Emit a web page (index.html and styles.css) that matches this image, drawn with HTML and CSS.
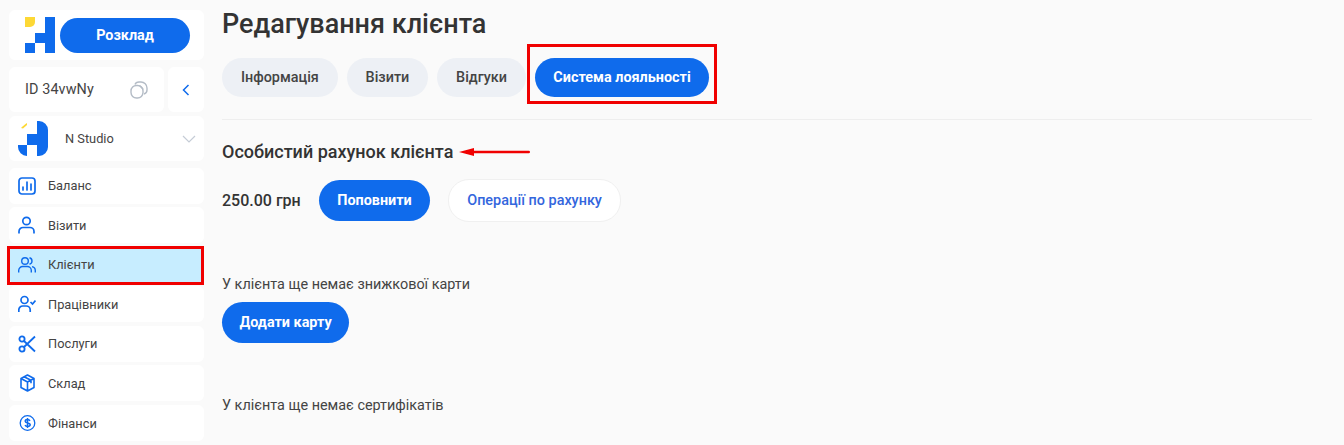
FILE: index.html
```html
<!DOCTYPE html>
<html lang="uk">
<head>
  <meta charset="UTF-8" />
  <title>Редагування клієнта</title>
  <link rel="stylesheet" href="styles.css">
</head>
<body>
  <div class="layout">
    <div class="sidebar">
      <div class="card logo-card">
        <svg class="logo" width="30" height="36" viewBox="0 0 30 36">
          <path d="M0 0h10v5a5 5 0 0 1-5 5H0z" fill="#fdd835"/>
          <path d="M20 0h10v36H20V26H10V16h10zM0 26h10v10H0z" fill="#0f6bec"/>
        </svg>
        <a class="btn schedule-btn" href="#">Розклад</a>
      </div>
      <div class="id-row">
        <div class="card id-card">
          <span>ID 34vwNy</span>
          <svg width="18" height="18" viewBox="0 0 18 18" fill="none" stroke="#b4bcc6" stroke-width="1.4">
            <rect x="1" y="4.500" width="12" height="12.500" rx="5.500"/>
            <path d="M5 3.500C5.500 2 7 1 9 1h2a6 6 0 0 1 6 6v2c0 2-1 3.500-3 4"/>
            <path d="M9.500 4.500l3.500 3.500"/>
          </svg>
        </div>
        <div class="card back-card">
          <svg width="8" height="12" viewBox="0 0 8 12" fill="none" stroke="#0f6bec" stroke-width="1.5"><path d="M6.500 1L1.500 6l5 5"/></svg>
        </div>
      </div>
      <div class="card studio-card">
        <svg class="studio-logo" width="30" height="35" viewBox="0 0 30 35">
          <path d="M3 7c2-2 4-4 6-5v2L5 7.500z" fill="#fdd835"/>
          <path d="M19 0h2a9 9 0 0 1 9 9v17a9 9 0 0 1-9 9h-2V24H9V13h10zM0 24h9v11a9 9 0 0 1-9-9z" fill="#0f6bec"/>
        </svg>
        <span class="studio-name">N Studio</span>
        <svg class="studio-arrow" width="14" height="8" viewBox="0 0 14 8" fill="none" stroke="#c5ccd6" stroke-width="1.2"><path d="M1 1l6 6 6-6"/></svg>
      </div>
      <ul class="menu">
        <li class="menu-item">
          <svg width="18" height="18" viewBox="0 0 18 18" fill="none" stroke="#0f6bec" stroke-width="1.700" stroke-linecap="round"><rect x="1" y="1" width="16" height="16" rx="3"/><path d="M5 13v-3M9 13V5M13 13V7"/></svg>
          Баланс
        </li>
        <li class="menu-item">
          <svg width="18" height="18" viewBox="0 0 18 18" fill="none" stroke="#0f6bec" stroke-width="1.700"><circle cx="8.500" cy="5" r="3.700"/><path d="M1 17.500v-2a4 4 0 0 1 4-4h7a4 4 0 0 1 4 4v2"/></svg>
          Візити
        </li>
        <li class="menu-item active">
          <svg width="18" height="18" viewBox="0 0 18 18" fill="none" stroke="#0f6bec" stroke-width="1.400"><circle cx="7" cy="5" r="3.300"/><path d="M.7 16.500v-2a4 4 0 0 1 4-4h4.600a4 4 0 0 1 4 4v2M11.500 1.800a3.300 3.300 0 0 1 0 6.400M14 10.600a4 4 0 0 1 3.300 3.900v2"/></svg>
          Клієнти
        </li>
        <li class="menu-item">
          <svg width="18" height="18" viewBox="0 0 18 18" fill="none" stroke="#0f6bec" stroke-width="1.700"><circle cx="6.500" cy="5" r="3.500"/><path d="M.8 17v-2a4 4 0 0 1 4-4h3.400a4 4 0 0 1 4 4v2M12.500 7l2 2 3-3.500"/></svg>
          Працівники
        </li>
        <li class="menu-item">
          <svg width="18" height="18" viewBox="0 0 18 18" fill="none" stroke="#0f6bec" stroke-width="1.800"><circle cx="4" cy="4" r="2.600"/><circle cx="4" cy="14" r="2.600"/><path d="M6 6L17 16.500M6 12L17 1.500"/></svg>
          Послуги
        </li>
        <li class="menu-item">
          <svg width="18" height="18" viewBox="0 0 18 18" fill="none" stroke="#0f6bec" stroke-width="1.600" stroke-linejoin="round"><path d="M9.500 1l6.500 3.500v9L9.500 17 3 13.500v-9zM3 4.500L9.500 8 16 4.500M9.500 8v9M6 2.800l7 3.500v3"/></svg>
          Склад
        </li>
        <li class="menu-item">
          <svg width="18" height="18" viewBox="0 0 18 18" fill="none" stroke="#0f6bec" stroke-width="1.300"><circle cx="9.500" cy="9" r="7.300"/><path d="M12 6.800C11.500 5.900 10.500 5.500 9.500 5.500c-1.300 0-2.300.7-2.300 1.700 0 2.500 5 .9 5 3.600 0 1-1 1.700-2.700 1.700-1 0-2-.5-2.500-1.300M9.500 4v10" stroke-width="1.500"/></svg>
          Фінанси
        </li>
      </ul>
    </div>
    <div class="main">
      <h1 class="title">Редагування клієнта</h1>
      <div class="tabs">
        <a class="tab" href="#">Інформація</a>
        <a class="tab" href="#">Візити</a>
        <a class="tab" href="#">Відгуки</a>
        <a class="tab tab-active" href="#">Система лояльності</a>
      </div>
      <hr class="divider">
      <h2 class="subtitle">Особистий рахунок клієнта</h2>
      <div class="account-row">
        <span class="amount">250.00 грн</span>
        <a class="btn" href="#">Поповнити</a>
        <a class="btn btn-outline" href="#">Операції по рахунку</a>
      </div>
      <p class="note card-note">У клієнта ще немає знижкової карти</p>
      <a class="btn add-btn" href="#">Додати карту</a>
      <p class="note cert-note">У клієнта ще немає сертифікатів</p>
    </div>
  </div>

  <!-- red annotations on top of the screenshot -->
  <div class="mark mark-menu"></div>
  <div class="mark mark-tab"></div>
  <svg class="mark-arrow" width="72" height="10" viewBox="0 0 72 10">
    <path d="M0 5l15-4v2.800h54.800a1.200 1.200 0 0 1 0 2.400H15V9z" fill="#f00000"/>
  </svg>
</body>
</html>
```

FILE: styles.css
```css
html, body {
  margin: 0;
  padding: 0;
  height: 445px;
  overflow: hidden;
  font-family: Roboto, sans-serif;
  background-color: #fafafa;
  color: #333;
}

.layout {
  display: flex;
}

.sidebar {
  width: 195px;
  margin: 10px 18px 0 9px;
  flex-shrink: 0;
}

.card {
  background: white;
  border-radius: 6px;
}

.logo-card {
  height: 50px;
  display: flex;
  align-items: center;
  padding-left: 16px;
  gap: 5px;
  box-sizing: border-box;
}

.btn {
  display: inline-flex;
  align-items: center;
  justify-content: center;
  height: 41px;
  padding: 0 18.5px;
  box-sizing: border-box;
  background: #0f6bec;
  color: white;
  font-size: 14.4px;
  font-weight: 700;
  text-decoration: none;
  border-radius: 21px;
}

.schedule-btn {
  width: 130px;
  height: 35px;
}

.id-row {
  display: flex;
  gap: 4px;
  margin-top: 7px;
}

.id-card {
  width: 155px;
  height: 45px;
  display: flex;
  align-items: center;
  justify-content: space-between;
  padding: 0 16px;
  box-sizing: border-box;
  font-size: 14.4px;
  letter-spacing: 0.1px;
  color: #444;
}

.back-card {
  width: 36px;
  height: 45px;
  display: flex;
  align-items: center;
  justify-content: center;
}

.studio-card {
  height: 45px;
  margin-top: 4px;
  display: flex;
  align-items: center;
  padding: 0 8px 0 9px;
  font-size: 12.8px;
  color: #444;
}

.studio-name {
  margin-left: 17px;
  flex: 1;
}

.menu {
  list-style: none;
  margin: 6.5px 0 0;
  padding: 0;
}

.menu-item {
  height: 36px;
  margin-bottom: 3.6px;
  display: flex;
  align-items: center;
  gap: 12px;
  padding-left: 9px;
  background: white;
  border-radius: 6px;
  font-size: 12.8px;
  color: #444;
}

.menu-item.active {
  background: #c7edff;
}

.main {
  flex: 1;
  padding-right: 32px;
}

.title {
  margin: 8px 0 0;
  font-size: 27px;
  line-height: 32px;
  font-weight: 500;
}

.tabs {
  display: flex;
  gap: 9px;
  margin-top: 18px;
}

.tab {
  height: 39px;
  padding: 0 18.9px;
  display: flex;
  align-items: center;
  background: #edf0f5;
  border-radius: 20px;
  color: #444;
  font-size: 14.4px;
  font-weight: 500;
  text-decoration: none;
}

.tab-active {
  background: #0f6bec;
  color: white;
  font-weight: 700;
  padding: 0 18.5px;
}

.divider {
  border: 0;
  border-top: 1px solid #eee;
  margin: 22px 0 0;
}

.subtitle {
  margin: 22px 0 0;
  font-size: 18px;
  line-height: 20px;
  font-weight: 500;
}

.account-row {
  display: flex;
  align-items: center;
  margin-top: 17px;
}

.amount {
  font-size: 16px;
  font-weight: 500;
  margin-right: 18px;
}

.btn-outline {
  margin-left: 18px;
  height: 43px;
  padding: 0 18px;
  background: white;
  border: 1px solid #f0f0f0;
  color: #3366dd;
  font-weight: 500;
}

.note {
  margin: 0;
  font-size: 14.4px;
  line-height: 18px;
  color: #444;
}

.card-note {
  margin-top: 54px;
}

.add-btn {
  margin-top: 8px;
  padding: 0 17.5px;
}

.cert-note {
  margin-top: 54px;
}

.mark {
  position: absolute;
  border: 3px solid #f00000;
  box-sizing: border-box;
}

.mark-menu {
  left: 7px;
  top: 246px;
  width: 197px;
  height: 39px;
}

.mark-tab {
  left: 527px;
  top: 44px;
  width: 190px;
  height: 60px;
}

.mark-arrow {
  position: absolute;
  left: 459px;
  top: 147px;
}
```
